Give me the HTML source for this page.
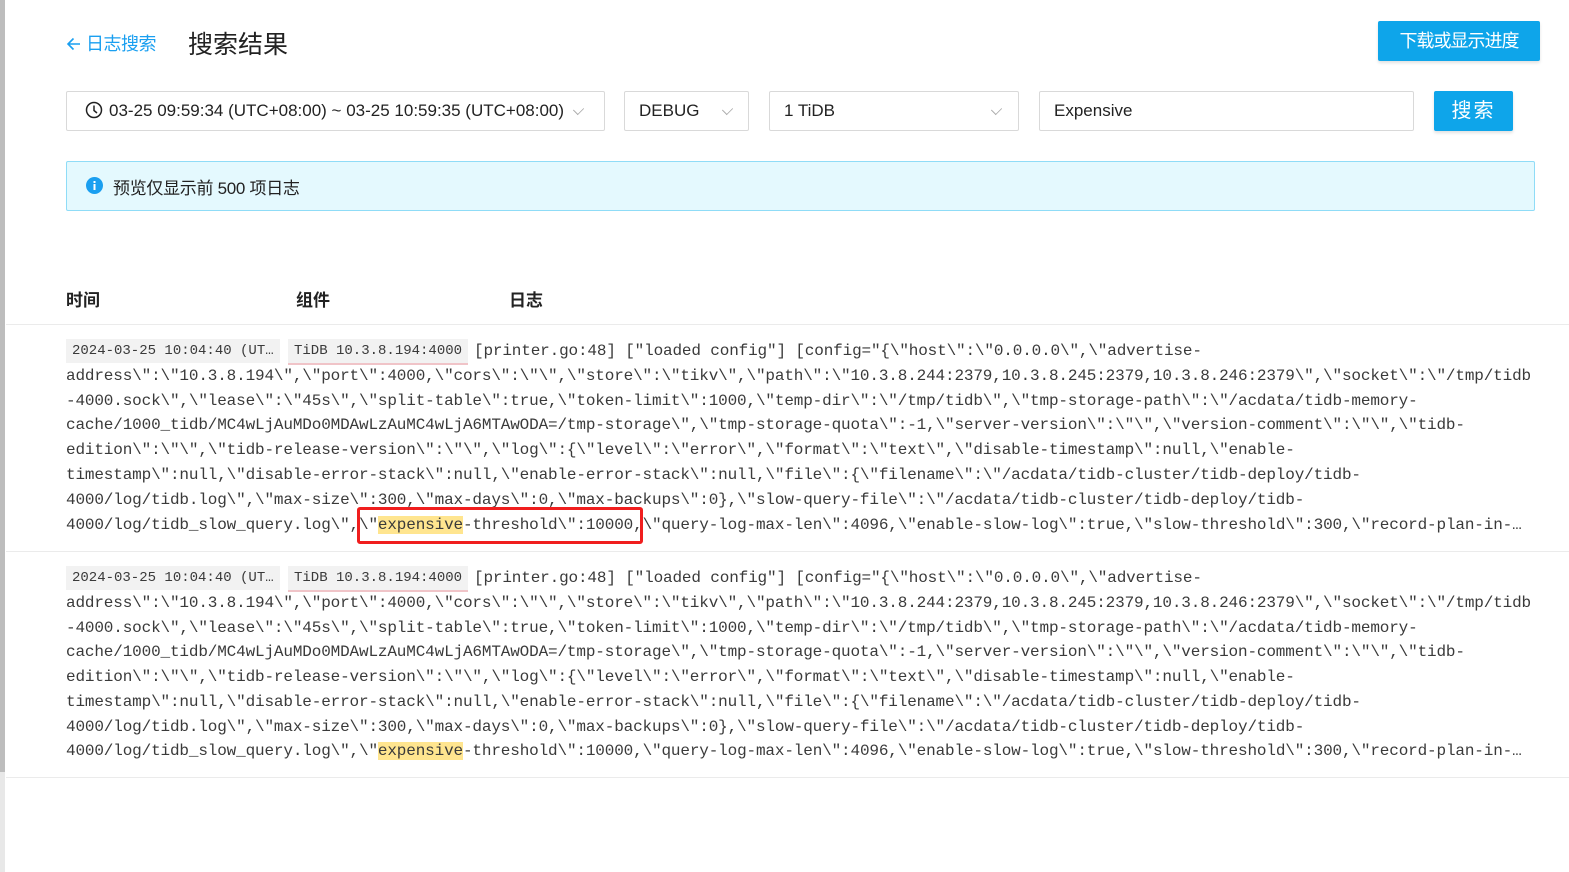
<!DOCTYPE html>
<html><head><meta charset="utf-8"><style>
*{margin:0;padding:0;box-sizing:border-box}
body{width:1569px;height:872px;background:#fff;position:relative;overflow:hidden;font-family:"Liberation Sans","Noto Sans CJK SC",sans-serif;color:#333}
.a{position:absolute}
.box{position:absolute;border:1px solid #d9d9d9;border-radius:2px;background:#fff;font-size:17px;color:#222;line-height:38px;padding-left:14px;letter-spacing:0}
.chev{position:absolute;top:13px;width:9px;height:9px;border-right:1.3px solid #aaa;border-bottom:1.3px solid #aaa;transform:rotate(45deg) scaleX(.75)}
.btn{position:absolute;background:#0ea5ea;color:#fff;border-radius:2px;text-align:center;box-shadow:0 2px 3px rgba(0,0,0,.12)}
.ln{position:absolute;left:66px;font-family:"Liberation Mono",monospace;font-size:16px;color:#3a3a3a;white-space:pre;line-height:25px;height:25px;letter-spacing:-0.15px}
.tag{display:inline-block;background:#f2f2f2;font-size:14px;padding:0 6px;line-height:24px;margin-right:8px;vertical-align:top;letter-spacing:0}
.hl{background:#ffe58f}
.sep{position:absolute;left:6px;right:0;height:1px;background:#ebebeb}
.th{position:absolute;top:286px;font-size:17px;font-weight:bold;color:#222}
</style></head><body>
<div class="a" style="left:0;top:0;width:5px;height:772px;background:#bdbdbd"></div>
<div class="a" style="left:0;top:772px;width:5px;height:100px;background:#e8e8e8"></div>

<div class="a" style="left:66px;top:30px;font-size:18px;color:#1a9ff0;letter-spacing:-0.5px">
<svg width="16" height="16" viewBox="0 0 16 16" style="vertical-align:-2px;margin-right:4px"><path d="M14 8H2M7.5 2.5L2 8l5.5 5.5" fill="none" stroke="#1a9ff0" stroke-width="1.6"/></svg>日志搜索</div>
<div class="a" style="left:188px;top:25px;font-size:25px;color:#222">搜索结果</div>
<div class="btn" style="left:1378px;top:21px;width:162px;height:40px;line-height:40px;font-size:18px;letter-spacing:-1px">下载或显示进度</div>

<div class="box" style="left:66px;top:91px;width:539px;height:40px;padding-left:18px">
<svg width="18" height="18" viewBox="0 0 18 18" style="vertical-align:-3px;margin-right:6px"><circle cx="9" cy="9" r="7.5" fill="none" stroke="#222" stroke-width="1.5"/><path d="M9 4.5V9.5l3 2.5" fill="none" stroke="#222" stroke-width="1.5"/></svg>03-25 09:59:34 (UTC+08:00) ~ 03-25 10:59:35 (UTC+08:00)
<div class="chev" style="left:507px"></div></div>
<div class="box" style="left:624px;top:91px;width:125px;height:40px">DEBUG<div class="chev" style="left:98px"></div></div>
<div class="box" style="left:769px;top:91px;width:250px;height:40px">1 TiDB<div class="chev" style="left:222px"></div></div>
<div class="box" style="left:1039px;top:91px;width:375px;height:40px">Expensive</div>
<div class="btn" style="left:1434px;top:91px;width:79px;height:40px;line-height:40px;font-size:20px;letter-spacing:2px">搜索</div>

<div class="a" style="left:66px;top:161px;width:1469px;height:50px;background:#e4f9fe;border:1px solid #8fdcf7;border-radius:2px"></div>
<svg class="a" style="left:86px;top:177px" width="17" height="17" viewBox="0 0 17 17"><circle cx="8.5" cy="8.5" r="8.5" fill="#1a9ff0"/><rect x="7.5" y="7" width="2" height="6" fill="#fff"/><rect x="7.5" y="4" width="2" height="2" fill="#fff"/></svg>
<div class="a" style="left:113px;top:174px;font-size:17px;color:#222;letter-spacing:-0.3px">预览仅显示前 500 项日志</div>

<div class="th" style="left:66px">时间</div>
<div class="th" style="left:296px">组件</div>
<div class="th" style="left:509px">日志</div>
<div class="sep" style="top:324px"></div>

<div class="ln" style="top:339px"><span class="tag" style="width:214px">2024-03-25 10:04:40 (UT…</span><span class="tag" style="border-bottom:2px solid #f0c4c8;width:180px;margin-right:6px">TiDB 10.3.8.194:4000</span>[printer.go:48] ["loaded config"] [config="{\"host\":\"0.0.0.0\",\"advertise-</div>
<div class="ln" style="top:364px">address\":\"10.3.8.194\",\"port\":4000,\"cors\":\"\",\"store\":\"tikv\",\"path\":\"10.3.8.244:2379,10.3.8.245:2379,10.3.8.246:2379\",\"socket\":\"/tmp/tidb</div>
<div class="ln" style="top:389px">-4000.sock\",\"lease\":\"45s\",\"split-table\":true,\"token-limit\":1000,\"temp-dir\":\"/tmp/tidb\",\"tmp-storage-path\":\"/acdata/tidb-memory-</div>
<div class="ln" style="top:413px">cache/1000_tidb/MC4wLjAuMDo0MDAwLzAuMC4wLjA6MTAwODA=/tmp-storage\",\"tmp-storage-quota\":-1,\"server-version\":\"\",\"version-comment\":\"\",\"tidb-</div>
<div class="ln" style="top:438px">edition\":\"\",\"tidb-release-version\":\"\",\"log\":{\"level\":\"error\",\"format\":\"text\",\"disable-timestamp\":null,\"enable-</div>
<div class="ln" style="top:463px">timestamp\":null,\"disable-error-stack\":null,\"enable-error-stack\":null,\"file\":{\"filename\":\"/acdata/tidb-cluster/tidb-deploy/tidb-</div>
<div class="ln" style="top:488px">4000/log/tidb.log\",\"max-size\":300,\"max-days\":0,\"max-backups\":0},\"slow-query-file\":\"/acdata/tidb-cluster/tidb-deploy/tidb-</div>
<div class="ln" style="top:513px">4000/log/tidb_slow_query.log\",\"<span class="hl">expensive</span>-threshold\":10000,\"query-log-max-len\":4096,\"enable-slow-log\":true,\"slow-threshold\":300,\"record-plan-in-…</div>
<div class="a" style="left:357px;top:507px;width:286px;height:37px;border:3px solid #f01e1e;border-radius:3px"></div>
<div class="sep" style="top:551px"></div>

<div class="ln" style="top:566px"><span class="tag" style="width:214px">2024-03-25 10:04:40 (UT…</span><span class="tag" style="border-bottom:2px solid #f0c4c8;width:180px;margin-right:6px">TiDB 10.3.8.194:4000</span>[printer.go:48] ["loaded config"] [config="{\"host\":\"0.0.0.0\",\"advertise-</div>
<div class="ln" style="top:591px">address\":\"10.3.8.194\",\"port\":4000,\"cors\":\"\",\"store\":\"tikv\",\"path\":\"10.3.8.244:2379,10.3.8.245:2379,10.3.8.246:2379\",\"socket\":\"/tmp/tidb</div>
<div class="ln" style="top:616px">-4000.sock\",\"lease\":\"45s\",\"split-table\":true,\"token-limit\":1000,\"temp-dir\":\"/tmp/tidb\",\"tmp-storage-path\":\"/acdata/tidb-memory-</div>
<div class="ln" style="top:640px">cache/1000_tidb/MC4wLjAuMDo0MDAwLzAuMC4wLjA6MTAwODA=/tmp-storage\",\"tmp-storage-quota\":-1,\"server-version\":\"\",\"version-comment\":\"\",\"tidb-</div>
<div class="ln" style="top:665px">edition\":\"\",\"tidb-release-version\":\"\",\"log\":{\"level\":\"error\",\"format\":\"text\",\"disable-timestamp\":null,\"enable-</div>
<div class="ln" style="top:690px">timestamp\":null,\"disable-error-stack\":null,\"enable-error-stack\":null,\"file\":{\"filename\":\"/acdata/tidb-cluster/tidb-deploy/tidb-</div>
<div class="ln" style="top:715px">4000/log/tidb.log\",\"max-size\":300,\"max-days\":0,\"max-backups\":0},\"slow-query-file\":\"/acdata/tidb-cluster/tidb-deploy/tidb-</div>
<div class="ln" style="top:739px">4000/log/tidb_slow_query.log\",\"<span class="hl">expensive</span>-threshold\":10000,\"query-log-max-len\":4096,\"enable-slow-log\":true,\"slow-threshold\":300,\"record-plan-in-…</div>
<div class="sep" style="top:777px"></div>
</body></html>
